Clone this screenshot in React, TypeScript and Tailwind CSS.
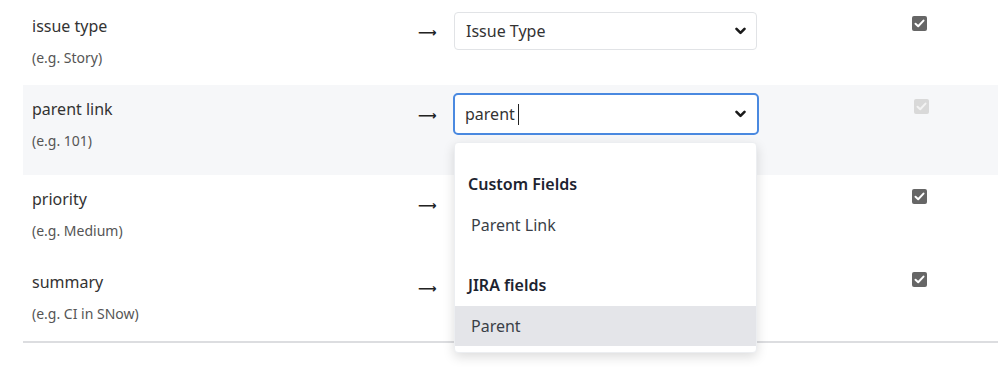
import React from 'react';

interface FieldRow {
  label: string;
  hint: string;
  value: string;
  focused?: boolean;
  disabled?: boolean;
}

// rows 3 and 4 sit under the open menu, so their select text is not shown
const rows: FieldRow[] = [
  { label: 'issue type', hint: '(e.g. Story)', value: 'Issue Type' },
  { label: 'parent link', hint: '(e.g. 101)', value: 'parent', focused: true, disabled: true },
  { label: 'priority', hint: '(e.g. Medium)', value: '' },
  { label: 'summary', hint: '(e.g. CI in SNow)', value: '' },
];

const Chevron: React.FC = () => (
  <svg width="11" height="8" viewBox="0 0 11 8" aria-hidden="true">
    <path d="M1.5 1.8 L5.5 5.8 L9.5 1.8" fill="none" stroke="#1a1a1a" strokeWidth="2.6" strokeLinecap="round" strokeLinejoin="round" />
  </svg>
);

const Check: React.FC<{ disabled?: boolean }> = ({ disabled }) => (
  <div
    className={`flex h-[15px] w-[15px] items-center justify-center rounded-[2px] ${
      disabled ? 'bg-[#d9d9d9]' : 'bg-[#666666]'
    }`}
  >
    <svg width="11" height="9" viewBox="0 0 11 9" aria-hidden="true">
      <path
        d="M1.5 4.8 L4.2 7.3 L9.5 1.6"
        fill="none"
        stroke={disabled ? '#f3f3f3' : '#ffffff'}
        strokeWidth="2"
        strokeLinecap="round"
        strokeLinejoin="round"
      />
    </svg>
  </div>
);

const Select: React.FC<{ value: string; focused?: boolean }> = ({ value, focused }) => {
  if (focused) {
    return (
      <div className="flex h-[42px] w-[306px] -ml-[1px] items-center rounded-[5px] border-2 border-[#4a89e0] bg-white pl-[10px] pr-[11px]">
        <span className="text-[16px] text-[#333333]">{value}</span>
        <span className="ml-[3px] h-[21px] w-[1px] bg-[#222]" />
        <span className="ml-auto">
          <Chevron />
        </span>
      </div>
    );
  }
  return (
    <div className="mt-[2px] flex h-[38px] w-[303px] items-center rounded-[4px] border border-[#e1e3e6] bg-white pl-[11px] pr-[10px]">
      {value && <span className="text-[16px] text-[#333333]">{value}</span>}
      <span className="ml-auto">
        <Chevron />
      </span>
    </div>
  );
};

const Dropdown: React.FC = () => (
  <div className="absolute left-[454px] top-[142px] w-[303px] rounded-[4px] border border-[#eceef1] bg-white pt-2 pb-[6px] shadow-[0_4px_12px_rgba(0,0,0,0.14)]">
    <div className="pl-[13px] pt-[21px] pb-[8px] text-[16px] font-semibold leading-6 text-[#1d2330]">Custom Fields</div>
    <div className="flex h-[42px] items-center pl-[16px] text-[16px] text-[#3a3f47]">Parent Link</div>
    <div className="pl-[13px] pt-[27px] pb-[9px] text-[16px] font-semibold leading-6 text-[#1d2330]">JIRA fields</div>
    <div className="flex h-[40px] items-center bg-[#e4e5e9] pl-[16px] text-[16px] text-[#3a3f47]">Parent</div>
  </div>
);

export default function App() {
  return (
    <div
      className="relative h-[367px] w-[998px] overflow-hidden bg-white pt-[2px]"
      style={{ fontFamily: '"Noto Sans", "Open Sans", sans-serif' }}
    >
      <div className="ml-[23px] border-b-2 border-[#dcdde0]">
        {rows.map((r) => (
          <div
            key={r.label}
            className={`flex items-start pl-[9px] pt-[8px] ${r.focused ? 'h-[90px] bg-[#f6f7f9]' : 'h-[83px]'}`}
          >
            <div className="w-[386px] pt-[4px]">
              <div className="text-[16px] leading-6 text-[#333333]">{r.label}</div>
              <div className="mt-[10px] text-[14px] leading-5 text-[#555555]">{r.hint}</div>
            </div>
            <div
              className={`flex w-[36px] items-center pt-[4px] text-[13px] font-bold text-[#222] ${r.focused ? 'h-[42px]' : 'mt-[2px] h-[38px]'}`}
              style={{ fontFamily: '"DejaVu Sans", sans-serif' }}
            >
              ⟶
            </div>
            <Select value={r.value} focused={r.focused} />
            <div className="ml-[155px] mt-[6px]">
              <Check disabled={r.disabled} />
            </div>
          </div>
        ))}
      </div>
      <Dropdown />
    </div>
  );
}
